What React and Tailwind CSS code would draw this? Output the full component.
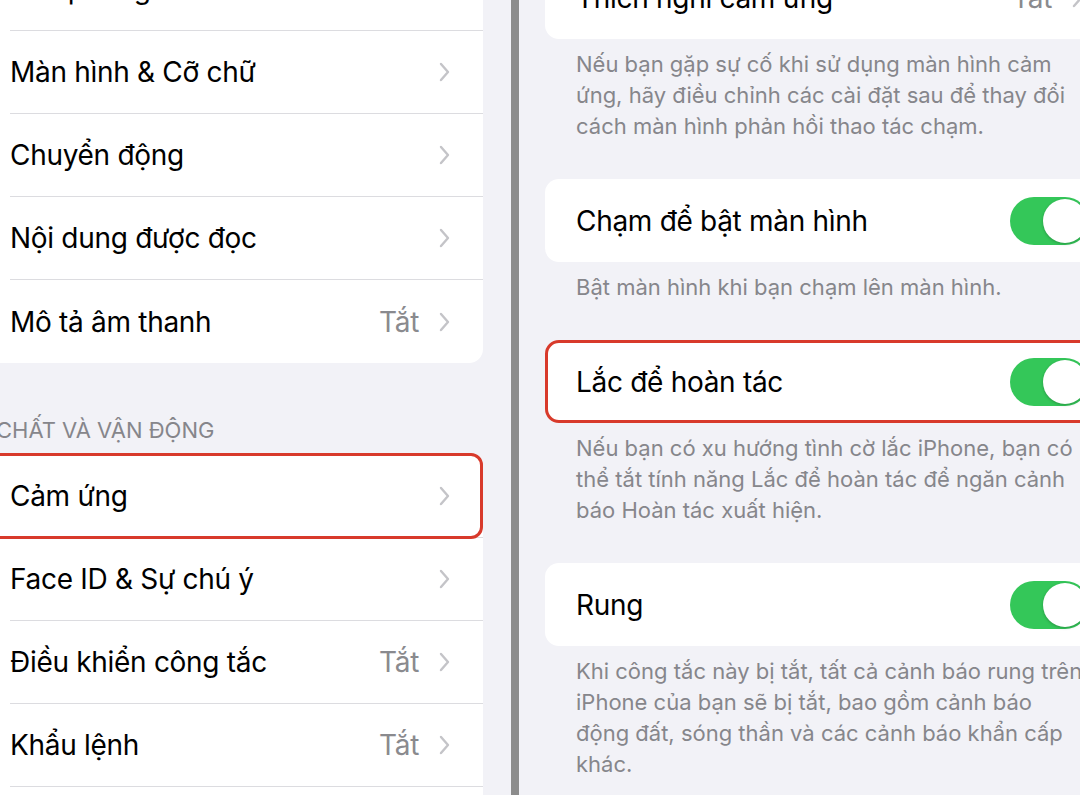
import React from "react";

const FONT = "font-['Inter','Noto_Sans',sans-serif]";

function Chevron() {
  return (
    <svg width="11" height="20" viewBox="0 0 11 20" className="shrink-0">
      <path d="M2 2 L9 10 L2 18" fill="none" stroke="#c4c4c8" strokeWidth="2.4" strokeLinecap="round" strokeLinejoin="round" />
    </svg>
  );
}

function Row({ label, value, last, highlight }) {
  return (
    <div className="relative h-[83px] flex pl-[10px]">
      <div
        className={
          "flex-1 flex items-center justify-between pr-[33px] " +
          (last ? "" : "border-b border-[#dcdce0]")
        }
      >
        <span className="text-[28px] text-black tracking-[-0.3px] whitespace-nowrap">{label}</span>
        <div className="flex items-center gap-[20px]">
          {value && <span className="text-[28px] text-[#8a8a8e] tracking-[-0.3px]">{value}</span>}
          <Chevron />
        </div>
      </div>
      {highlight && (
        <div className="absolute -top-[2px] -bottom-[1px] -left-[20px] right-0 border-[3px] border-[#d83a2b] rounded-[12px]" />
      )}
    </div>
  );
}

function Toggle() {
  return (
    <div className="w-[79px] h-[48px] rounded-full bg-[#34c759] flex items-center justify-end pr-[2px] shrink-0">
      <div className="w-[44px] h-[44px] rounded-full bg-white shadow-[0_1px_3px_rgba(0,0,0,0.25)]" />
    </div>
  );
}

function Card({ label, toggle, value, highlight }) {
  return (
    <div
      className={
        "w-[572px] h-[83px] bg-white rounded-[14px] flex items-center justify-between shrink-0 " +
        (highlight ? "border-[3px] border-[#d83a2b] pl-[28px] pr-[25px]" : "pl-[31px] pr-[28px]")
      }
    >
      <span className="text-[28px] text-black tracking-[-0.3px] whitespace-nowrap">{label}</span>
      {toggle ? (
        <Toggle />
      ) : (
        <div className="flex items-center gap-[20px] pr-[6px]">
          <span className="text-[28px] text-[#8a8a8e] tracking-[-0.3px]">{value}</span>
          <Chevron />
        </div>
      )}
    </div>
  );
}

function Note({ lines }) {
  return (
    <div className="pl-[31px] pt-[10px] pb-[37px] text-[22px] leading-[31px] text-[#86868b]">
      {lines.map((l) => (
        <div key={l} className="whitespace-nowrap">{l}</div>
      ))}
    </div>
  );
}

export default function App() {
  return (
    <div className={"w-[1080px] h-[795px] overflow-hidden bg-[#f2f2f7] flex " + FONT}>
      {/* left screenshot */}
      <div className="w-[511px] shrink-0 pr-[28px]">
        <div className="-mt-[52px] bg-white rounded-r-[14px]">
          <Row label="Thu phóng" value="Tắt" />
          <Row label="Màn hình & Cỡ chữ" />
          <Row label="Chuyển động" />
          <Row label="Nội dung được đọc" />
          <Row label="Mô tả âm thanh" value="Tắt" last />
        </div>
        <div className="pt-[54px] pb-[12px] -ml-[54px] text-[22px] leading-[26px] text-[#86868b] whitespace-nowrap">
          THỂ CHẤT VÀ VẬN ĐỘNG
        </div>
        <div className="bg-white rounded-r-[14px]">
          <Row label="Cảm ứng" highlight />
          <Row label="Face ID & Sự chú ý" />
          <Row label="Điều khiển công tắc" value="Tắt" />
          <Row label="Khẩu lệnh" value="Tắt" />
          <Row label="Nút sườn" last />
        </div>
      </div>

      <div className="w-[8px] shrink-0 bg-[#8c8c8c]" />

      {/* right screenshot */}
      <div className="flex-1 min-w-0 pl-[26px] flex flex-col">
        <div className="-mt-[44px]">
          <Card label="Thích nghi cảm ứng" value="Tắt" />
        </div>
        <Note
          lines={[
            "Nếu bạn gặp sự cố khi sử dụng màn hình cảm",
            "ứng, hãy điều chỉnh các cài đặt sau để thay đổi",
            "cách màn hình phản hồi thao tác chạm.",
          ]}
        />
        <Card label="Chạm để bật màn hình" toggle />
        <Note lines={["Bật màn hình khi bạn chạm lên màn hình."]} />
        <Card label="Lắc để hoàn tác" toggle highlight />
        <Note
          lines={[
            "Nếu bạn có xu hướng tình cờ lắc iPhone, bạn có",
            "thể tắt tính năng Lắc để hoàn tác để ngăn cảnh",
            "báo Hoàn tác xuất hiện.",
          ]}
        />
        <Card label="Rung" toggle />
        <Note
          lines={[
            "Khi công tắc này bị tắt, tất cả cảnh báo rung trên",
            "iPhone của bạn sẽ bị tắt, bao gồm cảnh báo",
            "động đất, sóng thần và các cảnh báo khẩn cấp",
            "khác.",
          ]}
        />
      </div>
    </div>
  );
}
